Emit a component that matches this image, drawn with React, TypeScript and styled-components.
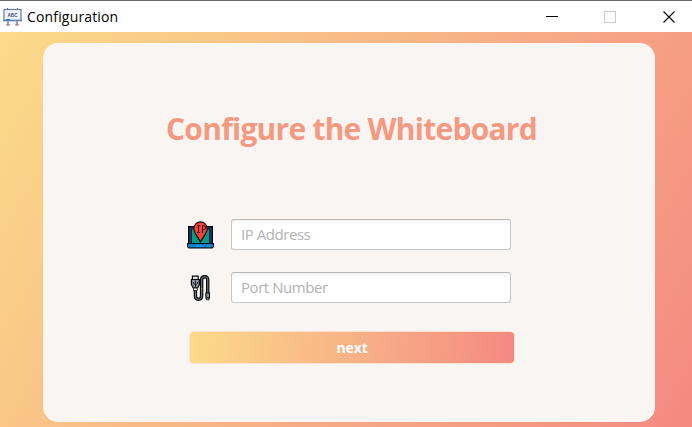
import React from "react";
import styled, { createGlobalStyle } from "styled-components";

const GlobalStyle = createGlobalStyle`
  * { box-sizing: border-box; }
  body { margin: 0; overflow: hidden; }
`;

const Window = styled.div`
  width: 692px;
  height: 427px;
  display: flex;
  flex-direction: column;
  font-family: "Open Sans", "Noto Sans", sans-serif;
`;

const TitleBar = styled.header`
  height: 32px;
  flex: none;
  display: flex;
  align-items: center;
  padding-left: 3px;
  background: #fff;
  border-top: 1px solid #6b6b6b;
`;

const WindowTitle = styled.span`
  flex: 1;
  margin-left: 5px;
  font-size: 14px;
  line-height: 20px;
  letter-spacing: 0.16px;
  color: #000;
`;

const WindowButton = styled.span<{ $width: number }>`
  width: ${(p) => p.$width}px;
  height: 31px;
  display: flex;
  align-items: center;
  justify-content: center;
`;

const Scene = styled.main`
  flex: 1;
  padding: 11px 37px 5px 43px;
  background: linear-gradient(119.7deg, #fbdb89, #f48982);
`;

const Card = styled.section`
  height: 379px;
  padding: 66px 0 0 144px;
  background: #f9f5f2;
  border-radius: 15px;
`;

const Heading = styled.h1`
  width: 380px;
  height: 40px;
  margin: 0 0 0 -21px;
  font-size: 30px;
  line-height: 40px;
  font-weight: 700;
  letter-spacing: -0.76px;
  white-space: nowrap;
  color: #f59a82;
`;

const Form = styled.form`
  margin-top: 70px;
`;

const Field = styled.label`
  display: flex;
  align-items: center;
  gap: 16px;
  height: 31px;
  margin-bottom: 22px;
`;

const IconSlot = styled.span`
  width: 28px;
  height: 28px;
  flex: none;
`;

const Input = styled.input`
  width: 280px;
  height: 31px;
  padding: 0 9px 1px;
  border: 1px solid #c8c8c8;
  border-top-color: #b8b8b8;
  border-radius: 3px;
  background: linear-gradient(#f3f3f3, #fff 5px);
  outline: none;
  font: 15px "Open Sans", "Noto Sans", sans-serif;
  letter-spacing: -0.45px;
  &::placeholder { color: #b2b2b2; opacity: 1; }
`;

const NextButton = styled.button`
  display: block;
  width: 326px;
  height: 33px;
  margin: 28px 0 0 2px;
  padding: 0;
  border: 1px solid #f9e3d5;
  border-radius: 4px;
  background: linear-gradient(95.5deg, #fbdb89, #f48982) border-box;
  background-clip: padding-box;
  color: #fff;
  font: 700 14px "Open Sans", "Noto Sans", sans-serif;
  letter-spacing: -0.1px;
`;

const BoardIcon = () => (
  <svg width="19" height="20" viewBox="0 0 19 20" fill="none">
    <path d="M4 1.5h1M14 1.5h1" stroke="#776b87" />
    <rect x="1" y="2.5" width="17" height="11" fill="#eef3fc" stroke="#667c9f" strokeWidth="1.2" />
    <path d="M0 13.5h19" stroke="#5a85b5" strokeWidth="1.5" />
    <path d="M3 12.5h4" stroke="#2676b8" />
    <path d="M5 14v4M14 14v4" stroke="#b195ab" strokeWidth="2" />
    <path d="M3 18h4M12 18h4" stroke="#996889" />
    <text x="9.5" y="9.5" textAnchor="middle" fontFamily="Liberation Sans" fontSize="4.6" fontWeight="700" fill="#4b4775" textLength="10">ABC</text>
  </svg>
);

const IpIcon = () => (
  <svg width="28" height="28" viewBox="0 0 28 28">
    <path d="M1.7 5.7h23.6v18H1.7z" fill="#2c3c86" stroke="#050912" strokeWidth="1.4" />
    <path d="M4.3 7.8h18.4v15H4.3z" fill="#079985" stroke="#071719" />
    <path d="M.6 22.6h25.8v3.2l-1.2 1H1.8l-1.2-1z" fill="#169bf0" stroke="#04101b" strokeWidth="1.2" />
    <path d="M2 25h7M12 25h1M15 25h10" stroke="#0b61a8" strokeWidth=".8" />
    <path d="M13.5 21C12 17 6.8 12.7 6.8 7.6a6.7 6.7 0 0 1 13.4 0c0 5.1-5.2 9.4-6.7 13.4z" fill="#f44336" stroke="#140606" strokeWidth="1.1" />
    <path d="M10 4.5h3M11.5 4.5v7M10 11.5h3M15.5 12V4.5h1.2q1.8 0 1.8 2t-1.8 2h-1.2" fill="none" stroke="#300c0b" />
  </svg>
);

const CableIcon = () => (
  <svg width="28" height="28" viewBox="0 0 28 28" fill="none">
    <path d="M8.4 15v7q0 3.2 3.1 3.2t3.1-3.2V6q0-3.2 3.1-3.2T20.7 6v14" stroke="#08090b" strokeWidth="3.4" />
    <path d="M8.4 15v7q0 3.2 3.1 3.2t3.1-3.2V6q0-3.2 3.1-3.2T20.7 6v14" stroke="#65717d" strokeWidth="1.2" />
    <path d="M5.4 2.2h5.8v3.5H5.4z" fill="#dbe2e9" stroke="#08090b" strokeWidth="1.2" />
    <path d="M4.4 5.5h8v5L10.6 14H6.2l-1.8-3.5z" fill="#8b959f" stroke="#08090b" strokeWidth="1.2" />
    <path d="M8.4 6.5V13M6.3 8v1.3l2.1 1.6 2.1-1.6V8" stroke="#14171b" strokeWidth=".9" />
    <path d="M6.6 14h3.6v2.6H6.6z" fill="#e9eff5" stroke="#08090b" strokeWidth=".8" />
    <path d="M18.9 19h3.6v5h-3.6z" fill="#8b959f" stroke="#08090b" strokeWidth="1.1" />
    <path d="M19.4 24h2.6v1.8h-2.6z" fill="#dbe2e9" stroke="#08090b" strokeWidth=".9" />
    <path d="M14 14.8h1.3" stroke="#edbd4c" />
  </svg>
);

export default function App() {
  return (
    <Window>
      <GlobalStyle />
      <TitleBar>
        <BoardIcon />
        <WindowTitle>Configuration</WindowTitle>
        <WindowButton $width={46}>
          <svg width="12" height="12"><path d="M0 5.5h12" stroke="#000" /></svg>
        </WindowButton>
        <WindowButton $width={70}>
          <svg width="12" height="12"><rect x=".5" y=".5" width="11" height="11" fill="none" stroke="#ccc" /></svg>
        </WindowButton>
        <WindowButton $width={47}>
          <svg width="12" height="12"><path d="M.5.5l11 11M11.5.5l-11 11" stroke="#000" strokeWidth="1.1" /></svg>
        </WindowButton>
      </TitleBar>
      <Scene>
        <Card>
          <Heading>Configure the Whiteboard</Heading>
          <Form onSubmit={(e) => e.preventDefault()}>
            <Field>
              <IconSlot><IpIcon /></IconSlot>
              <Input placeholder="IP Address" />
            </Field>
            <Field>
              <IconSlot><CableIcon /></IconSlot>
              <Input placeholder="Port Number" />
            </Field>
            <NextButton type="submit">next</NextButton>
          </Form>
        </Card>
      </Scene>
    </Window>
  );
}
